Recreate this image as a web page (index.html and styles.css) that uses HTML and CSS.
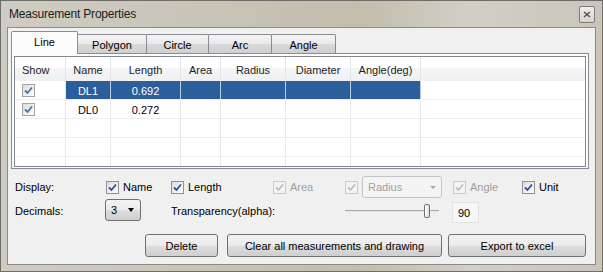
FILE: index.html
```html
<!DOCTYPE html>
<html lang="en">
<head>
    <meta charset="UTF-8">
    <title>Measurement Properties</title>
    <link rel="stylesheet" href="styles.css">
</head>
<body>
    <div class="window">
        <div class="titlebar">
            <span class="title">Measurement Properties</span>
            <span class="close">
                <svg width="8" height="7" viewBox="0 0 8 7"><path d="M1 1 L7 6 M7 1 L1 6" stroke="#555" stroke-width="1.6"/></svg>
            </span>
        </div>
        <div class="client">
            <div class="tabs">
                <div class="tab selected tab-line">Line</div>
                <div class="tab tab-polygon">Polygon</div>
                <div class="tab tab-circle">Circle</div>
                <div class="tab tab-arc">Arc</div>
                <div class="tab tab-angle">Angle</div>
            </div>
            <div class="tab-page">
                <div class="listview">
                    <div class="row head">
                        <div class="cell show">Show</div>
                        <div class="cell">Name</div>
                        <div class="cell">Length</div>
                        <div class="cell">Area</div>
                        <div class="cell">Radius</div>
                        <div class="cell">Diameter</div>
                        <div class="cell">Angle(deg)</div>
                        <div class="cell fill"></div>
                    </div>
                    <div class="row picked">
                        <div class="cell show"><span class="cb small"><svg width="11" height="11" viewBox="0 0 11 11"><path d="M2 5.5 L4.5 8 L9 2.5" fill="none" stroke="#4b6fa8" stroke-width="1.8"/></svg></span></div>
                        <div class="cell">DL1</div>
                        <div class="cell">0.692</div>
                        <div class="cell"></div>
                        <div class="cell"></div>
                        <div class="cell"></div>
                        <div class="cell"></div>
                        <div class="cell fill"></div>
                    </div>
                    <div class="row">
                        <div class="cell show"><span class="cb small"><svg width="11" height="11" viewBox="0 0 11 11"><path d="M2 5.5 L4.5 8 L9 2.5" fill="none" stroke="#4b6fa8" stroke-width="1.8"/></svg></span></div>
                        <div class="cell">DL0</div>
                        <div class="cell">0.272</div>
                        <div class="cell"></div>
                        <div class="cell"></div>
                        <div class="cell"></div>
                        <div class="cell"></div>
                        <div class="cell fill"></div>
                    </div>
                    <div class="row">
                        <div class="cell show"></div><div class="cell"></div><div class="cell"></div><div class="cell"></div>
                        <div class="cell"></div><div class="cell"></div><div class="cell"></div><div class="cell fill"></div>
                    </div>
                    <div class="row">
                        <div class="cell show"></div><div class="cell"></div><div class="cell"></div><div class="cell"></div>
                        <div class="cell"></div><div class="cell"></div><div class="cell"></div><div class="cell fill"></div>
                    </div>
                    <div class="row">
                        <div class="cell show"></div><div class="cell"></div><div class="cell"></div><div class="cell"></div>
                        <div class="cell"></div><div class="cell"></div><div class="cell"></div><div class="cell fill"></div>
                    </div>
                </div>
            </div>

            <div class="options display-row">
                <span class="label">Display:</span>
                <label class="check"><span class="cb"><svg width="11" height="11" viewBox="0 0 11 11"><path d="M2 5.5 L4.5 8 L9 2.5" fill="none" stroke="#2d4f94" stroke-width="1.8"/></svg></span>Name</label>
                <label class="check"><span class="cb"><svg width="11" height="11" viewBox="0 0 11 11"><path d="M2 5.5 L4.5 8 L9 2.5" fill="none" stroke="#2d4f94" stroke-width="1.8"/></svg></span>Length</label>
                <label class="check off"><span class="cb"><svg width="11" height="11" viewBox="0 0 11 11"><path d="M2 5.5 L4.5 8 L9 2.5" fill="none" stroke="#bdbdbd" stroke-width="1.8"/></svg></span>Area</label>
                <label class="check off"><span class="cb"><svg width="11" height="11" viewBox="0 0 11 11"><path d="M2 5.5 L4.5 8 L9 2.5" fill="none" stroke="#bdbdbd" stroke-width="1.8"/></svg></span></label>
                <div class="combo disabled"><span>Radius</span><span class="arrow"></span></div>
                <label class="check off"><span class="cb"><svg width="11" height="11" viewBox="0 0 11 11"><path d="M2 5.5 L4.5 8 L9 2.5" fill="none" stroke="#bdbdbd" stroke-width="1.8"/></svg></span>Angle</label>
                <label class="check"><span class="cb"><svg width="11" height="11" viewBox="0 0 11 11"><path d="M2 5.5 L4.5 8 L9 2.5" fill="none" stroke="#2d4f94" stroke-width="1.8"/></svg></span>Unit</label>
            </div>

            <div class="options decimals-row">
                <span class="label">Decimals:</span>
                <div class="combo small"><span>3</span><span class="arrow"></span></div>
                <span class="label">Transparency(alpha):</span>
                <div class="slider"><span class="track"></span><span class="thumb"></span></div>
                <div class="textbox">90</div>
            </div>

            <div class="buttons">
                <button class="btn btn-delete">Delete</button>
                <button class="btn btn-clear">Clear all measurements and drawing</button>
                <button class="btn btn-export">Export to excel</button>
            </div>
        </div>
    </div>
</body>
</html>
```

FILE: styles.css
```css
body {
    margin: 0;
    padding: 0;
    font-family: "Liberation Sans", Arial, sans-serif;
    font-size: 11px;
    color: #000;
    background: #fff;
}

.window {
    width: 603px;
    height: 272px;
    box-sizing: border-box;
    border: 1px solid #6d6d6a;
    padding: 0 6px 6px 6px;
    display: flex;
    flex-direction: column;
    background: linear-gradient(to right, #cfccc3 0%, #c9c5b9 30%, #c2bdad 60%, #d2cfc6 78%, #c9c5ba 100%);
}

.titlebar {
    height: 26px;
    display: flex;
    align-items: center;
    justify-content: space-between;
    padding-left: 2px;
}

.title {
    font-size: 12px;
    letter-spacing: -0.2px;
    color: #1a1a1a;
}

.close {
    width: 14px;
    height: 15px;
    margin-right: 1px;
    border: 1px solid #7d7d79;
    border-radius: 2px;
    background: linear-gradient(#eeede9, #d6d4cd);
    display: flex;
    align-items: center;
    justify-content: center;
}

.client {
    flex: 1;
    border: 1px solid #8b8b88;
    background: #f0f0f0;
    padding-top: 3px;
}

/* tabs */

.tabs {
    display: flex;
    align-items: flex-end;
    height: 22px;
    margin-left: 3px;
}

.tab {
    box-sizing: border-box;
    height: 19px;
    margin-left: -1px;
    border: 1px solid #898c95;
    border-bottom: none;
    border-radius: 2px 2px 0 0;
    background: linear-gradient(#f4f4f4 0%, #e9e9e9 50%, #d9d9d9 51%, #d0d0d0 100%);
    display: flex;
    align-items: center;
    justify-content: center;
    padding-top: 1px;
}

.tab.selected {
    height: 23px;
    margin-left: 0;
    margin-bottom: -1px;
    background: #fcfcfc;
    position: relative;
    z-index: 1;
    padding-bottom: 3px;
}

.tab-line { width: 67px; }
.tab-polygon { width: 70px; }
.tab-circle { width: 63px; }
.tab-arc { width: 64px; }
.tab-angle { width: 65px; }

.tab-page {
    height: 116px;
    box-sizing: border-box;
    margin: 0 6px 0 3px;
    border: 1px solid #898c95;
    background: #fcfcfc;
    padding: 2px 2px 1px 2px;
}

/* list view */

.listview {
    height: 100%;
    box-sizing: border-box;
    border: 1px solid #828790;
    background: #fff;
    overflow: hidden;
}

.row {
    display: grid;
    grid-template-columns: 51px 45px 70px 40px 65px 65px 70px 1fr;
    height: 18px;
    border-bottom: 1px solid #ededed;
}

.row.head {
    height: 24px;
    border-bottom: none;
    background: linear-gradient(#ffffff 0%, #ffffff 45%, #f4f5f7 46%, #eff0f2 100%);
}

.cell {
    border-right: 1px solid #e8e8e8;
    display: flex;
    align-items: center;
    justify-content: center;
    padding-top: 1px;
}

.head .cell {
    border-right: 1px solid #e3e4e6;
    color: #1e1e1e;
}

.cell.show {
    justify-content: flex-start;
    padding-left: 7px;
}

.cell.fill {
    border-right: none;
}

.picked .cell {
    background: #2c5e9b;
    color: #fff;
    border-right-color: #b9cbe0;
}

.picked .cell.show,
.picked .cell.fill {
    background: #fff;
    color: #000;
    border-right-color: #e8e8e8;
}

.picked .cell.fill {
    border-right: none;
}

/* check boxes */

.cb {
    width: 11px;
    height: 11px;
    border: 1px solid #8f8f8f;
    background: linear-gradient(135deg, #dcdcdc, #ffffff);
    display: inline-flex;
    align-items: center;
    justify-content: center;
    margin-right: 4px;
    flex-shrink: 0;
}

.cb.small {
    border-color: #a3a3a3;
}

.check {
    display: flex;
    align-items: center;
}

.check.off {
    color: #a0a0a0;
}

.check.off .cb {
    border-color: #c9c9c9;
    background: #f4f4f4;
}

/* bottom options */

.options {
    display: grid;
    align-items: center;
    padding-left: 7px;
}

.display-row {
    margin-top: 7px;
    height: 22px;
    grid-template-columns: 91px 65px 102px 72px 17px 91px 69px auto;
}

.decimals-row {
    margin-top: 1px;
    height: 24px;
    grid-template-columns: 90px 66px 174px 106px auto;
}

.combo {
    box-sizing: border-box;
    height: 22px;
    border: 1px solid #707070;
    border-radius: 3px;
    background: linear-gradient(#f3f3f3 0%, #ebebeb 50%, #dddddd 51%, #cfcfcf 100%);
    display: flex;
    align-items: center;
    justify-content: space-between;
    padding: 0 5px 0 5px;
}

.combo.small {
    width: 36px;
    margin-top: -2px;
}

.combo.disabled {
    width: 80px;
    border-color: #c2c4c6;
    background: #f4f4f4;
    color: #a0a0a0;
    padding-right: 4px;
}

.arrow {
    width: 0;
    height: 0;
    border-left: 3.5px solid transparent;
    border-right: 3.5px solid transparent;
    border-top: 4px solid #000;
    margin-right: 1px;
}

.disabled .arrow {
    border-left-width: 3px;
    border-right-width: 3px;
    border-top: 3px solid #a6a6a6;
}

.slider {
    position: relative;
    width: 94px;
    height: 24px;
}

.track {
    position: absolute;
    left: 0;
    right: 0;
    top: 11px;
    height: 1px;
    background: #a8a8a8;
    border-bottom: 1px solid #e6e6e6;
}

.thumb {
    position: absolute;
    left: 79px;
    top: 5px;
    width: 4px;
    height: 12px;
    border: 1px solid #6f6f6f;
    border-radius: 2px;
    background: linear-gradient(to right, #ffffff, #dcdcdc);
}

.textbox {
    box-sizing: border-box;
    width: 27px;
    height: 21px;
    margin-left: 1px;
    margin-top: 3px;
    border: 1px solid #e2e2e2;
    background: #f6f6f6;
    padding-left: 5px;
    display: flex;
    align-items: center;
}

/* buttons */

.buttons {
    display: flex;
    justify-content: flex-end;
    padding-right: 9px;
    margin-top: 11px;
}

.btn {
    box-sizing: border-box;
    height: 23px;
    border: 1px solid #707070;
    border-radius: 3px;
    background: linear-gradient(#f2f2f2 0%, #ebebeb 50%, #dddddd 51%, #cfcfcf 100%);
    font-family: "Liberation Sans", Arial, sans-serif;
    font-size: 11px;
    color: #000;
    padding: 0;
}

.btn-delete { width: 73px; }
.btn-clear { width: 215px; margin-left: 9px; }
.btn-export { width: 138px; margin-left: 6px; }
```
